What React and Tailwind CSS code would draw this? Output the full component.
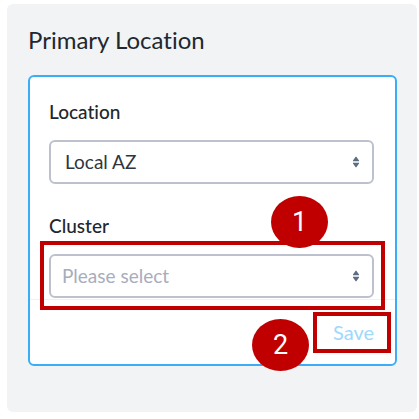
function SelectArrows() {
  return (
    <svg
      className="pointer-events-none col-start-1 row-start-1 mr-[14px] h-3 w-2 self-center justify-self-end"
      viewBox="0 0 8 12"
      fill="#5d6d81"
      aria-hidden="true"
    >
      <path d="M3.6 0.8h0.8L7 4.6v0.6H1v-0.6Z" />
      <path d="M3.6 11.2h0.8L7 7.4v-0.6H1v0.6Z" />
    </svg>
  );
}

function SelectField({ id, label, option, textClass }) {
  return (
    <div className="flex flex-col gap-4">
      <label htmlFor={id} className="text-[19px] leading-6 font-medium text-[#22272e]">
        {label}
      </label>
      <div className="grid">
        <select
          id={id}
          className={`col-start-1 row-start-1 h-11 w-full appearance-none rounded-md border-2 border-[#bcc1cd] bg-white pr-8 text-[19px] ${textClass}`}
        >
          <option>{option}</option>
        </select>
        <SelectArrows />
      </div>
    </div>
  );
}

function Callout({ number, className }) {
  return (
    <span
      className={`absolute z-10 flex h-[52px] w-[57px] items-center justify-center rounded-[50%] bg-[#c00000] font-['Roboto',sans-serif] text-[27px] leading-none text-white ${className}`}
    >
      {number}
    </span>
  );
}

export default function App() {
  return (
    <main className="flex flex-col bg-white pt-1 pr-0.5 pb-[7px] pl-[7px] font-['Lato',sans-serif] [font-variant-ligatures:none]">
      <section className="flex flex-col gap-[19px] rounded-md bg-[#f2f3f5] pt-5 pr-5 pb-[46px] pl-[21px]">
        <h1 className="text-[24px] leading-8 text-[#22272e]">Primary Location</h1>
        <form className="flex flex-col rounded-md border-2 border-[#3aacf8] bg-white">
          <div className="flex flex-col gap-[30px] border-b border-[#f0f1f4] pt-[23px] pr-[21px] pb-px pl-[19px]">
            <SelectField id="location" label="Location" option="Local AZ" textClass="pl-[14px] text-[#30353d]" />
            <div className="relative">
              <SelectField id="cluster" label="Cluster" option="Please select" textClass="pl-[11px] text-[#a8acbd]" />
              <span className="pointer-events-none absolute top-[27px] -right-[11px] -bottom-3 -left-[9px] border-4 border-[#c00000]" />
              <Callout number="1" className="-top-[18px] right-[46px]" />
            </div>
          </div>
          <div className="flex justify-end py-5 pr-[21px]">
            <div className="relative flex">
              <button type="button" className="text-[20px] leading-6 text-[#9ed8fd]">
                Save
              </button>
              <span className="pointer-events-none absolute -top-2 -right-[17px] -bottom-[9px] -left-5 border-4 border-[#c00000]" />
              <Callout number="2" className="-top-px right-[65px]" />
            </div>
          </div>
        </form>
      </section>
    </main>
  );
}
